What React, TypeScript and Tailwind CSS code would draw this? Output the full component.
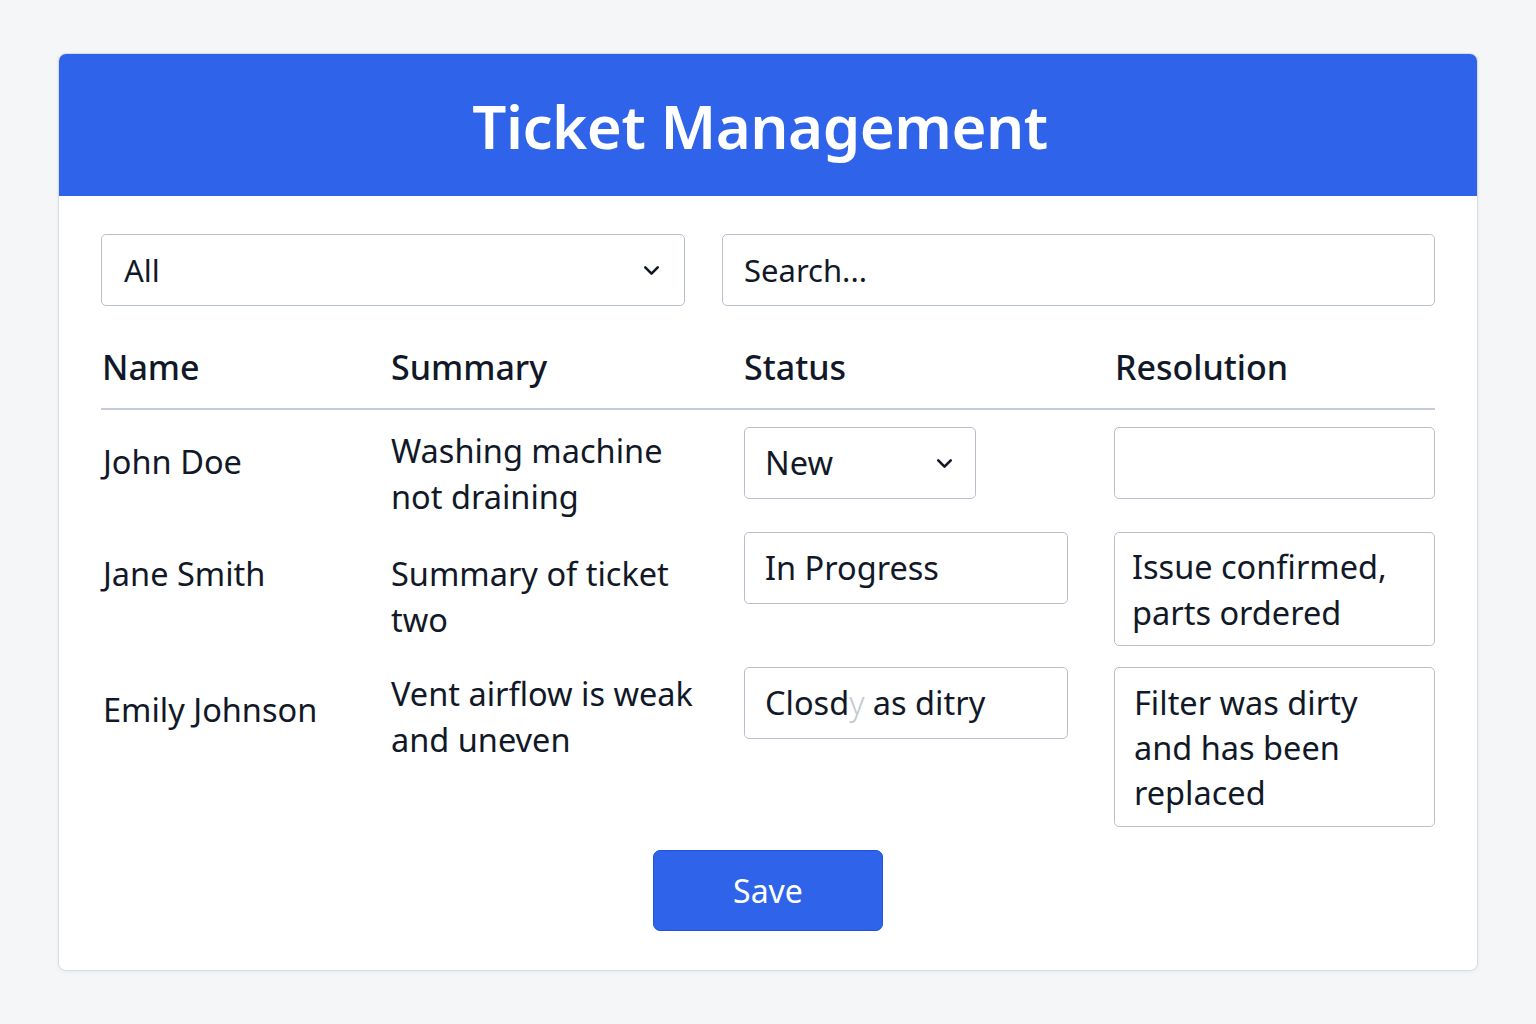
import { ChevronDown } from "lucide-react";

const font = { fontFamily: '"Noto Sans", "Open Sans", sans-serif' };

const inputBox = "border border-[#b7bfcc] rounded-[5px] bg-white";

export default function App() {
    return (
        <div className="min-h-screen bg-[#f5f6f8] pt-[53px] px-[58px] text-[#111827]" style={font}>
            <div className="w-[1420px] h-[918px] bg-white rounded-[8px] border border-[#d9dde3] shadow-[0_1px_4px_rgba(0,0,0,0.06)] overflow-hidden">
                {/* header */}
                <div className="h-[142px] bg-[#2f64ea] flex items-center justify-center pr-[16px]">
                    <h1 className="text-white text-[60px] font-semibold leading-none tracking-[-0.5px] mt-[2px]">Ticket Management</h1>
                </div>

                <div className="px-[42px] pt-[38px]">
                    {/* filters */}
                    <div className="flex gap-[37px]">
                        <div className={`${inputBox} w-[584px] h-[72px] flex items-center justify-between pl-[22px] pr-[20px]`}>
                            <span className="text-[31px]">All</span>
                            <ChevronDown className="w-[25px] h-[25px]" strokeWidth={2.5} />
                        </div>
                        <div className={`${inputBox} flex-1 h-[72px] flex items-center pl-[21px]`}>
                            <span className="text-[31px]">Search...</span>
                        </div>
                    </div>

                    {/* table header */}
                    <div className="grid grid-cols-[290px_353px_371px_1fr] mt-[38px] pb-[18px] border-b-2 border-[#c5ccd6] pl-[1px] text-[34px] font-medium leading-[46px]">
                        <div>Name</div>
                        <div className="-ml-[1px]">Summary</div>
                        <div className="-ml-[1px]">Status</div>
                        <div className="-ml-[1px]">Resolution</div>
                    </div>

                    {/* row 1 */}
                    <div className="grid grid-cols-[290px_353px_371px_1fr] mt-[17px] text-[32.5px] leading-[46px]">
                        <div className="pl-[2px] pt-[12px]">John Doe</div>
                        <div className="pt-[1px]">Washing machine<br />not draining</div>
                        <div>
                            <div className={`${inputBox} w-[232px] h-[72px] flex items-center justify-between pl-[20px] pr-[18px]`}>
                                <span>New</span>
                                <ChevronDown className="w-[25px] h-[25px]" strokeWidth={2.5} />
                            </div>
                        </div>
                        <div className={`${inputBox} h-[72px] -ml-[1px]`} />
                    </div>

                    {/* row 2 */}
                    <div className="grid grid-cols-[290px_353px_371px_1fr] mt-[12px] text-[32.5px] leading-[46px]">
                        <div className="pl-[2px] pt-[19px]">Jane Smith</div>
                        <div className="pt-[19px]">Summary of ticket<br />two</div>
                        <div>
                            <div className={`${inputBox} w-[324px] h-[72px] flex items-center pl-[20px]`}>In Progress</div>
                        </div>
                        <div className={`${inputBox} h-[114px] -ml-[1px] pl-[17px] pt-[11px]`}>Issue confirmed,<br />parts ordered</div>
                    </div>

                    {/* row 3 */}
                    <div className="grid grid-cols-[290px_353px_371px_1fr] mt-[21px] text-[32.5px] leading-[46px]">
                        <div className="pl-[2px] pt-[20px]">Emily Johnson</div>
                        <div className="pt-[4px]">Vent airflow is weak<br />and uneven</div>
                        <div>
                            <div className={`${inputBox} w-[324px] h-[72px] flex items-center pl-[20px]`}>
                                <span>Closd<span className="text-[#c4c8cf] font-light">y</span> as ditry</span>
                            </div>
                        </div>
                        <div className={`${inputBox} h-[160px] -ml-[1px] pl-[19px] pt-[12px] leading-[45px]`}>Filter was dirty<br />and has been<br />replaced</div>
                    </div>

                    {/* save */}
                    <div className="flex justify-center mt-[23px]">
                        <button className="w-[230px] h-[81px] bg-[#2f64ea] border border-[#1f52e0] rounded-[7px] text-white text-[32px]">Save</button>
                    </div>
                </div>
            </div>
        </div>
    );
}
